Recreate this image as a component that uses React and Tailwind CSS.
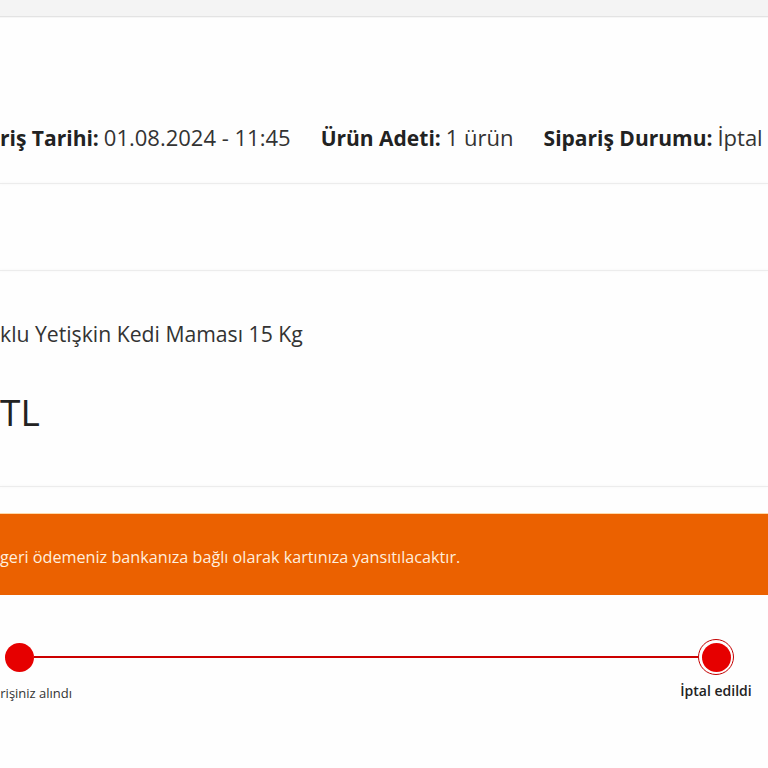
import React from 'react';

const font = { fontFamily: '"Open Sans", "Noto Sans", sans-serif' };

const Divider = () => <div className="h-px bg-[#ececec] shadow-[0_0_3px_rgba(0,0,0,0.06)]" />;

const Clip = ({ hidden, children }) => (
  <span className="relative">
    <span className="absolute right-full top-0">{hidden}</span>
    {children}
  </span>
);

const InfoItem = ({ label, value }) => (
  <span className="flex items-baseline gap-[5px]">
    <span className="font-bold text-[21px] text-[#222]">{label}</span>
    <span className="text-[22px] text-[#333]">{value}</span>
  </span>
);

export default function App() {
  return (
    <div className="w-[768px] h-[768px] overflow-hidden bg-[#fefefe]" style={font}>
      <div className="h-[17px] bg-[#f4f4f4] border-b border-[#e3e3e3]" />
      <div className="h-px bg-[#f6f6f6]" />

      <div className="pt-[105px] pb-[31px]">
        <div className="flex items-center gap-[30px] whitespace-nowrap leading-[28px]">
          <span className="flex items-baseline gap-[5px]">
            <span className="font-bold text-[21px] text-[#222]">
              <Clip hidden="Sipa">riş Tarihi:</Clip>
            </span>
            <span className="text-[22px] text-[#333]">01.08.2024 - 11:45</span>
          </span>
          <InfoItem label="Ürün Adeti:" value="1 ürün" />
          <InfoItem label="Sipariş Durumu:" value="İptal edildi" />
        </div>
      </div>

      <Divider />
      <div className="h-[86px]" />
      <Divider />

      <div className="pt-[49px] pb-[50px] whitespace-nowrap text-[#333]">
        <div className="text-[21.2px] leading-[28px]">
          <Clip hidden="Pro Plan Tavu">klu Yetişkin Kedi Maması 15 Kg</Clip>
        </div>
        <div className="mt-[40px] text-[37px] leading-[48px] text-[#222]">
          <Clip hidden="2.499,00 ">TL</Clip>
        </div>
      </div>

      <Divider />

      <div className="mt-[26px] h-[82px] pt-[5px] bg-[#eb6100] border-t border-[#ffd9a8] flex items-center whitespace-nowrap">
        <span className="text-[16.2px] text-[#ffeedd]">
          <Clip hidden="Siparişiniz iptal edildi. ">geri ödemeniz bankanıza bağlı olarak kartınıza yansıtılacaktır.</Clip>
        </span>
      </div>

      <div className="mt-[44px] pl-[5px] pr-[34px] flex items-center whitespace-nowrap">
        <div className="relative">
          <div className="w-[29px] h-[29px] rounded-full bg-[#e60000]" />
          <span className="absolute top-full left-1/2 -translate-x-[46%] mt-[12px] text-[13px] text-[#333]">
            Siparişiniz alındı
          </span>
        </div>
        <div className="flex-1 h-[2px] bg-[#cc0000]" />
        <div className="relative">
          <div className="w-[36px] h-[36px] rounded-full border-[1.5px] border-[#c40000] p-[2.5px]">
            <div className="w-full h-full rounded-full bg-[#e60000]" />
          </div>
          <span className="absolute top-full left-1/2 -translate-x-1/2 mt-[5px] text-[14px] font-semibold text-[#222]">
            İptal edildi
          </span>
        </div>
      </div>
    </div>
  );
}
